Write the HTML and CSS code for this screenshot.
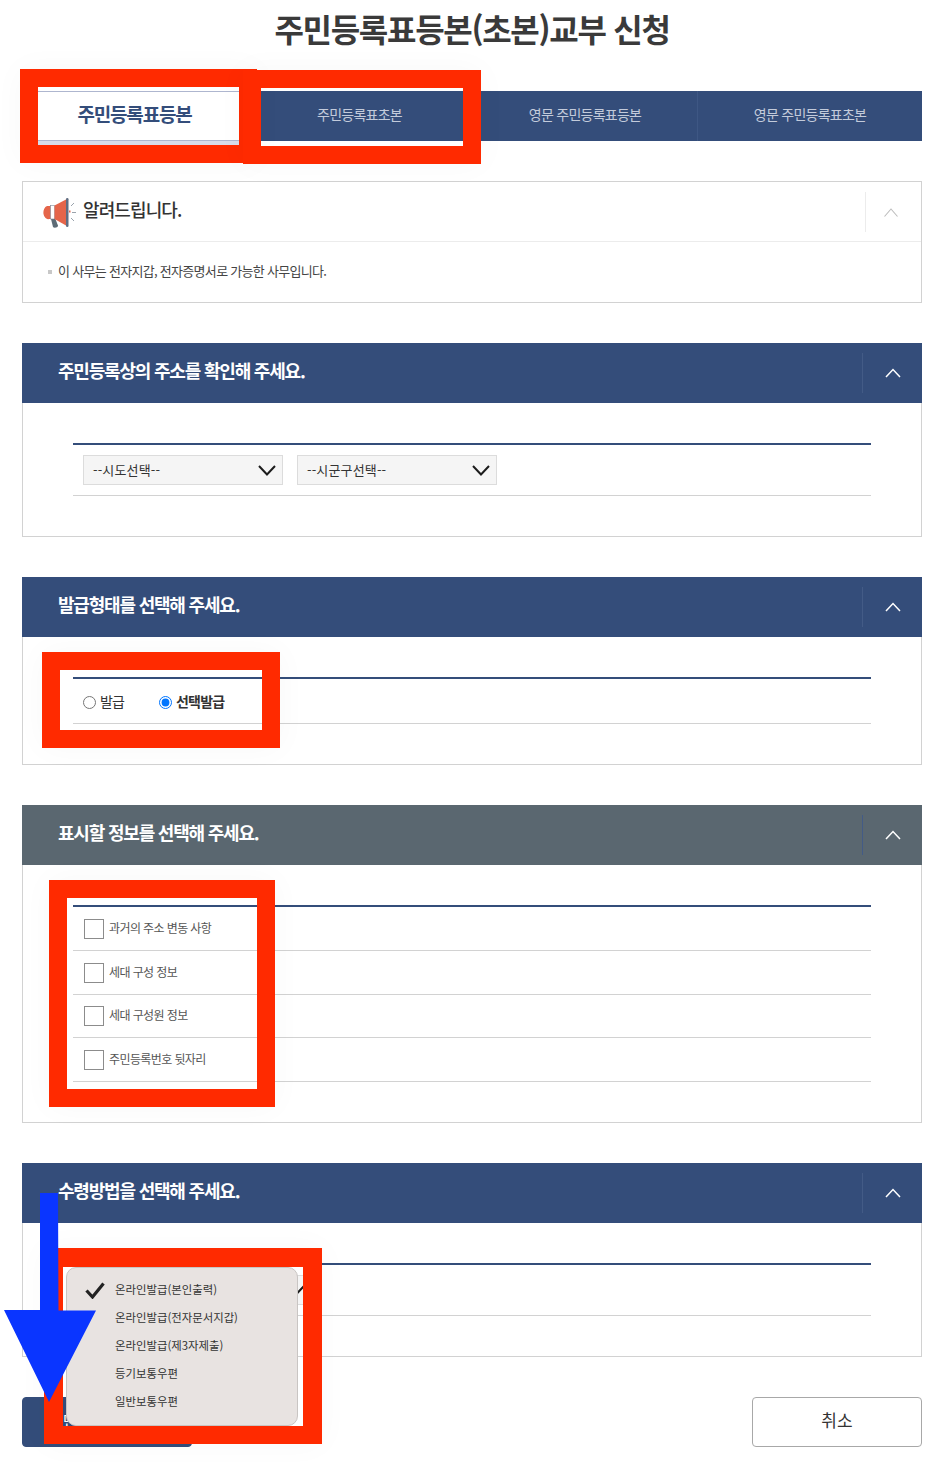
FILE: index.html
```html
<!DOCTYPE html>
<html lang="ko">
<head>
<meta charset="utf-8">
<title>주민등록표등본(초본)교부 신청</title>
<link rel="stylesheet" href="styles.css">
</head>
<body>
<div class="page">
  <h1 class="title">주민등록표등본(초본)교부 신청</h1>

  <div class="tabs">
    <div class="tab active">주민등록표등본</div>
    <div class="tab">주민등록표초본</div>
    <div class="tab">영문 주민등록표등본</div>
    <div class="tab">영문 주민등록표초본</div>
  </div>

  <section class="notice">
    <div class="notice-head">
      <svg class="horn" width="34" height="32" viewBox="0 0 34 32">
        <path d="M4 10h6v13H6a4.500 6.500 0 0 1-2-13z" fill="#e5654a"/>
        <path d="M10 23l2-1 3 7.500c.5 2-4 3-5 1.500l-2-8z" fill="#5d6b76"/>
        <rect x="7.500" y="9.500" width="4" height="13.500" fill="#fff" stroke="#7d8a99" stroke-width=".6"/>
        <path d="M11.500 9.500L23 3.500v26l-11.500-6.500z" fill="#e5654a"/>
        <rect x="23" y="2" width="2.500" height="29" rx="1.200" fill="#5f6d82"/>
        <path d="M26 15.500h1.500" stroke="#e5654a" stroke-width="2"/>
        <path d="M28 10l3-3M29 16.500h4M28 22l3 3" stroke="#9aa3ad" stroke-width="1" fill="none"/>
      </svg>
      <span class="notice-title">알려드립니다.</span>
      <span class="notice-toggle">
        <svg width="14" height="9" viewBox="0 0 14 9"><path d="M.5 8.500L7 1l6.500 7.500" fill="none" stroke="#bdbdbd" stroke-width="1.100"/></svg>
      </span>
    </div>
    <div class="notice-body"><span class="bullet"></span><span class="notice-text">이 사무는 전자지갑, 전자증명서로 가능한 사무입니다.</span></div>
  </section>

  <section class="panel">
    <div class="panel-head">
      <span class="panel-title">주민등록상의 주소를 확인해 주세요.</span>
      <span class="panel-toggle"><svg width="16" height="10" viewBox="0 0 16 10"><path d="M1 9l7-7.500L15 9" fill="none" stroke="#fff" stroke-width="1.500"/></svg></span>
    </div>
    <div class="panel-body">
      <div class="rows">
        <div class="row row-select">
          <div class="fake-select"><span>--시도선택--</span><svg width="18" height="11" viewBox="0 0 18 11"><path d="M1 1l8 8.500L17 1" fill="none" stroke="#1c1c1c" stroke-width="2"/></svg></div>
          <div class="fake-select"><span>--시군구선택--</span><svg width="18" height="11" viewBox="0 0 18 11"><path d="M1 1l8 8.500L17 1" fill="none" stroke="#1c1c1c" stroke-width="2"/></svg></div>
        </div>
      </div>
    </div>
  </section>

  <section class="panel">
    <div class="panel-head">
      <span class="panel-title">발급형태를 선택해 주세요.</span>
      <span class="panel-toggle"><svg width="16" height="10" viewBox="0 0 16 10"><path d="M1 9l7-7.500L15 9" fill="none" stroke="#fff" stroke-width="1.500"/></svg></span>
    </div>
    <div class="panel-body">
      <div class="rows">
        <div class="row row-radio">
          <label class="radio"><input type="radio" name="kind">발급</label>
          <label class="radio selected"><input type="radio" name="kind" checked>선택발급</label>
        </div>
      </div>
    </div>
  </section>

  <section class="panel">
    <div class="panel-head gray">
      <span class="panel-title">표시할 정보를 선택해 주세요.</span>
      <span class="panel-toggle"><svg width="16" height="10" viewBox="0 0 16 10"><path d="M1 9l7-7.500L15 9" fill="none" stroke="#fff" stroke-width="1.500"/></svg></span>
    </div>
    <div class="panel-body">
      <div class="rows">
        <div class="row row-check"><label class="check"><input type="checkbox"><span>과거의 주소 변동 사항</span></label></div>
        <div class="row row-check"><label class="check"><input type="checkbox"><span>세대 구성 정보</span></label></div>
        <div class="row row-check"><label class="check"><input type="checkbox"><span>세대 구성원 정보</span></label></div>
        <div class="row row-check"><label class="check"><input type="checkbox"><span>주민등록번호 뒷자리</span></label></div>
      </div>
    </div>
  </section>

  <section class="panel">
    <div class="panel-head">
      <span class="panel-title">수령방법을 선택해 주세요.</span>
      <span class="panel-toggle"><svg width="16" height="10" viewBox="0 0 16 10"><path d="M1 9l7-7.500L15 9" fill="none" stroke="#fff" stroke-width="1.500"/></svg></span>
    </div>
    <div class="panel-body">
      <div class="rows">
        <div class="row row-select">
          <div class="fake-select wide"><svg width="18" height="11" viewBox="0 0 18 11"><path d="M1 1l8 8.500L17 1" fill="none" stroke="#1c1c1c" stroke-width="2"/></svg></div>
        </div>
      </div>
    </div>
  </section>

  <div class="actions">
    <button class="btn primary">민원신청하기</button>
    <button class="btn">취소</button>
  </div>

  <div class="mark m1"></div>
  <div class="mark m2"></div>
  <div class="mark m3"></div>
  <div class="mark m4"></div>
  <div class="mark m5"></div>

  <ul class="menu">
    <li>
      <svg class="tick" width="20" height="17" viewBox="0 0 20 17"><path d="M1.500 8.500l6 6.500L18.500 1.500" fill="none" stroke="#222" stroke-width="3.200"/></svg>
      온라인발급(본인출력)
    </li>
    <li>온라인발급(전자문서지갑)</li>
    <li>온라인발급(제3자제출)</li>
    <li>등기보통우편</li>
    <li>일반보통우편</li>
  </ul>

  <svg class="arrow" width="92" height="210" viewBox="0 0 92 210">
    <path d="M36 0h18l.5 117.500H92L45 209 0 117h36z" fill="#0a35ff"/>
  </svg>
</div>
</body>
</html>
```
FILE: styles.css
```css
* { box-sizing: border-box; }
html, body { margin: 0; padding: 0; background: #fff; }
body { font-family: "Noto Sans CJK KR", "Noto Sans", sans-serif; color: #333; }

.page { position: relative; width: 947px; height: 1472px; padding: 0 25px 25px 22px; overflow: hidden; }

.title { margin: 0; height: 91px; padding-top: 3px; text-align: center; font-size: 32px; line-height: 50px; font-weight: 700; letter-spacing: -1.3px; color: #3a3a3a; }

.tabs { display: grid; grid-template-columns: repeat(4, 225px); height: 50px; background: #344d7a; }
.tab { display: flex; align-items: center; justify-content: center; padding-bottom: 4px; font-size: 14px; letter-spacing: -0.75px; color: #c3cbdb; border-left: 1px solid #3e5784; }
.tab:first-child { border-left: 0; }
.tab.active { padding-bottom: 5px; background: #fff; color: #344d7a; font-size: 19px; font-weight: 700; letter-spacing: -1.2px; border-top: 1px solid #aeb6cf; border-bottom: 1px solid #aeb6cf; box-shadow: 0 4px 0 #d8dcea; }
.tab.active + .tab { border-left: 0; }

.notice { margin-top: 40px; height: 122px; border: 1px solid #d2d2d2; }
.notice-head { display: flex; align-items: center; height: 60px; padding-left: 20px; border-bottom: 1px solid #ececec; }
.horn { margin-right: 6px; flex: none; }
.notice-title { flex: 1; padding-bottom: 5px; font-size: 18px; font-weight: 500; letter-spacing: -0.9px; color: #333; }
.notice-toggle { display: flex; align-items: center; justify-content: center; width: 56px; height: 40px; padding: 2px 5px 0 0; border-left: 1px solid #ececec; }
.notice-body { display: flex; align-items: center; height: 60px; padding-left: 25px; font-size: 13px; letter-spacing: -0.7px; color: #444; }
.notice-text { padding-bottom: 4px; }
.bullet { width: 4px; height: 4px; margin: 0 6px 0 0; background: #c8c8c8; }

.panel { margin-top: 40px; border: 0 solid #d2d2d2; border-width: 0 1px 1px; }
.panel-head { display: flex; align-items: center; height: 60px; margin: 0 -1px; padding-left: 36px; background: #344d7a; color: #fff; }
.panel-head.gray { background: #5a6770; }
.panel-title { flex: 1; padding-bottom: 6px; font-size: 18px; font-weight: 700; letter-spacing: -1.2px; }
.panel-toggle { display: flex; align-items: center; justify-content: center; width: 60px; height: 40px; border-left: 1px solid #435b86; }
.panel-body { padding: 40px 50px; }

.rows { border-top: 2px solid #344d7a; }
.row { display: flex; align-items: center; padding-left: 10px; border-bottom: 1px solid #d2d2d2; }
.row-select { height: 51px; gap: 14px; }
.row-radio { height: 45px; gap: 34px; }
.row-check { height: 43.750px; padding-left: 11px; }

.fake-select { display: flex; align-items: center; justify-content: space-between; width: 200px; height: 30px; padding: 0 6px 0 9px; background: #f5f5f5; border: 1px solid #dcdcdc; font-size: 13px; letter-spacing: 0.15px; color: #333; }
.fake-select span { padding-bottom: 2px; }
.fake-select.wide { width: 229px; justify-content: flex-end; }

.radio { display: flex; align-items: center; width: 42px; font-size: 14px; letter-spacing: -0.8px; color: #333; white-space: nowrap; }
.radio input { width: 13px; height: 13px; margin: 2px 4px 0 0; flex: none; }
.radio.selected { font-weight: 700; }

.check { display: flex; align-items: center; font-size: 12px; letter-spacing: -0.6px; color: #555; }
.check input { appearance: none; width: 20px; height: 20px; margin: 1px 5px 0 0; background: #fff; border: 1px solid #8c8c8c; border-radius: 0; }
.check span { padding-bottom: 2px; }

.actions { display: flex; justify-content: space-between; margin-top: 40px; }
.btn { width: 170px; height: 50px; padding: 0 0 5px; background: #fff; border: 1px solid #a8a8a8; border-radius: 4px; font-family: inherit; font-size: 17px; color: #333; }
.btn.primary { font-size: 16px; background: #344d7a; border-color: #344d7a; color: #fff; }

.mark { position: absolute; border: 18px solid #ff2a00; box-shadow: 0 0 30px rgba(0, 0, 0, .03); }
.m1 { left: 20px; top: 69px; width: 237px; height: 94px; }
.m2 { left: 243px; top: 70px; width: 238px; height: 94px; }
.m3 { left: 42px; top: 652px; width: 238px; height: 96px; }
.m4 { left: 49px; top: 880px; width: 226px; height: 227px; }
.m5 { left: 44px; top: 1248px; width: 278px; height: 196px; border-width: 19px 19px 18px; }

.menu { position: absolute; left: 66px; top: 1267px; width: 232px; height: 159px; margin: 0; padding: 7px 0 0; list-style: none; background: #e8e3e1; border: 1px solid #c9c5c3; border-radius: 10px; }
.menu li { position: relative; height: 28px; padding-left: 48px; font-size: 11.400px; line-height: 28px; color: #333; white-space: nowrap; }
.tick { position: absolute; left: 18px; top: 7px; }

.arrow { position: absolute; left: 4px; top: 1193px; }
```
